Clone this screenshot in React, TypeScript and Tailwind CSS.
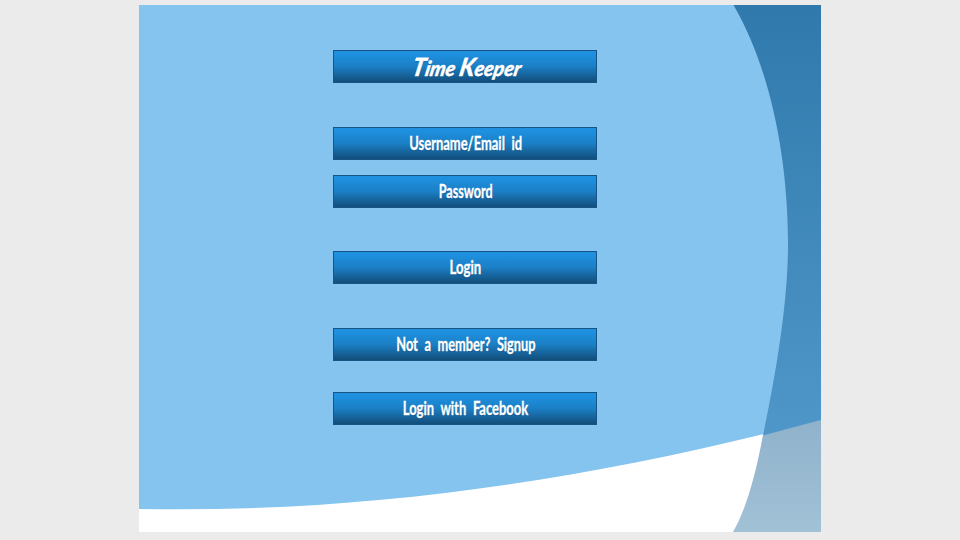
import React from 'react';

type ItemProps = {
  label: string;
  className: string;
  textClass: string;
};

const surface =
  "flex h-[33px] w-[264px] shrink-0 items-center justify-center border border-[#165585] bg-linear-to-b from-[#1e90df] from-10% via-[#1b7fc5] via-50% to-[#124e7b] whitespace-nowrap text-white [text-shadow:0_1px_1px_rgba(10,50,90,0.35)]";

function Item({ label, className, textClass }: ItemProps) {
  return (
    <button className={`${surface} ${className}`}>
      <span
        className={`inline-block shrink-0 font-['Lato',sans-serif] text-[18.5px] leading-none font-bold [-webkit-text-stroke:0.35px_white] [word-spacing:5px] ${textClass}`}
      >
        {label}
      </span>
    </button>
  );
}

function Backdrop() {
  return (
    <svg className="absolute inset-0 h-full w-full" viewBox="0 0 682 527" preserveAspectRatio="none" aria-hidden="true">
      <defs>
        <linearGradient id="upper" x1="0" y1="0" x2="0" y2="1">
          <stop offset="0" stopColor="#3079ac" />
          <stop offset="1" stopColor="#4f97c8" />
        </linearGradient>
        <linearGradient id="lower" x1="0" y1="0" x2="0" y2="1">
          <stop offset="0" stopColor="#8fb2cb" />
          <stop offset="1" stopColor="#a1c1d6" />
        </linearGradient>
      </defs>
      <path d="M0 0H682V414.500C440 478 220 508 0 504Z" fill="#86c4f0" />
      <path d="M624 430C616 473 607 504 594 527H682V414.500Z" fill="url(#lower)" />
      <path d="M594.500 0C630 61 649 149 649 239C649 287 641 350 624 430.500L682 415V0Z" fill="url(#upper)" />
    </svg>
  );
}

export default function App() {
  return (
    <div className="flex h-[540px] w-[960px] overflow-hidden bg-[#ebebeb] pt-[5px] pl-[139.4px]">
      <main className="relative h-[527px] w-[682px] overflow-hidden bg-white">
        <Backdrop />
        <div className="relative flex flex-col items-center pt-[45px] pr-[30px]">
          <h1 className={surface}>
            <span className="inline-block -skew-x-12 scale-x-[0.93] pl-1 font-['Lato',cursive] text-[21px] leading-none font-black italic [-webkit-text-stroke:0.4px_white]">
              <span className="text-[25px]">T</span>ime <span className="text-[25px]">K</span>eeper
            </span>
          </h1>
          <Item label="Username/Email id" className="mt-[44px]" textClass="scale-x-[0.70]" />
          <Item label="Password" className="mt-[15px]" textClass="scale-x-[0.68]" />
          <Item label="Login" className="mt-[43px]" textClass="scale-x-[0.71]" />
          <Item label="Not a member? Signup" className="mt-[44px]" textClass="scale-x-[0.69]" />
          <Item label="Login with Facebook" className="mt-[31px]" textClass="scale-x-[0.70]" />
        </div>
      </main>
    </div>
  );
}
